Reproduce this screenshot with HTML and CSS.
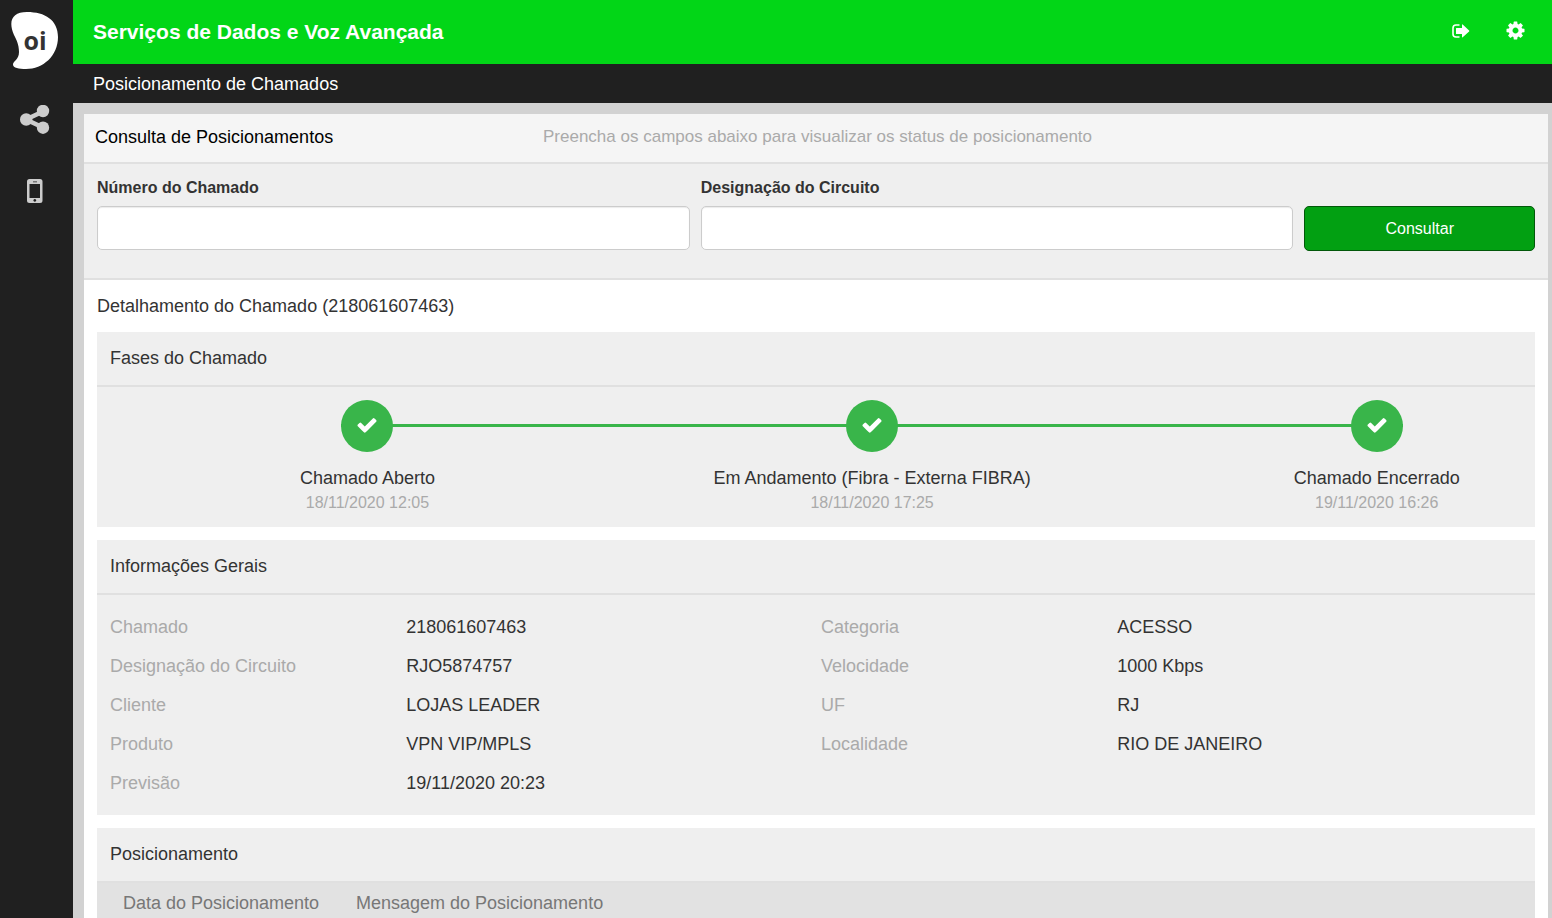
FILE: index.html
```html
<!DOCTYPE html>
<html lang="pt-BR">
<head>
<meta charset="utf-8">
<meta name="viewport" content="width=device-width, initial-scale=1">
<title>Posicionamento de Chamados</title>
<link rel="stylesheet" href="styles.css">
</head>
<body>
<div class="app">
  <nav class="sidebar" aria-label="Menu principal">
    <a class="logo" href="#" aria-label="oi">
      <svg width="48" height="58" viewBox="0 0 48 58">
        <path fill="#fff" d="M16 0C34 0 47 8 47 25c0 19-15 32-32 32-7 0-13-1-13-4.500C2 49 8 48 8 40 8 32 5 27 3 23-3 9 1 0 16 0z"/>
        <text class="logo-text" x="24" y="38" text-anchor="middle">oi</text>
      </svg>
    </a>
    <a class="nav-link" href="#" aria-label="Circuitos">
      <svg width="30" height="30" viewBox="0 0 30 30" fill="#ccc">
        <path d="M23 6.500 6 14.500l17 8" fill="none" stroke="#ccc" stroke-width="4.500"/>
        <circle cx="6.200" cy="14.500" r="6.200"/><circle cx="23" cy="6" r="6.200"/><circle cx="23" cy="22.700" r="6.200"/>
      </svg>
    </a>
    <a class="nav-link" href="#" aria-label="Celular">
      <svg width="16" height="24" viewBox="0 0 16 24">
        <path fill="#ccc" fill-rule="evenodd" d="M2.500 0h10.500a2.500 2.500 0 0 1 2.500 2.500v19a2.500 2.500 0 0 1-2.500 2.500H2.500A2.500 2.500 0 0 1 0 21.500v-19A2.500 2.500 0 0 1 2.500 0zM2.500 5v14h10.500V5zM6 2.500v.8h4v-.8zM7.800 20a1.400 1.400 0 1 0 .01 0z"/>
      </svg>
    </a>
  </nav>
  <div class="page">
    <header class="topbar">
      <h1 class="topbar-title">Serviços de Dados e Voz Avançada</h1>
      <div class="topbar-actions">
        <button class="icon-button" type="button" aria-label="Sair">
          <svg width="18" height="14" viewBox="0 0 18 14">
            <path d="M7.500 1H4Q1 1 1 4v6q0 3 3 3h3.500" fill="none" stroke="#fff" stroke-width="1.600"/>
            <path fill="#fff" d="M4.500 4H10V.8q0-.8.700-.3l6.400 6q.5.500 0 1l-6.400 5.800q-.7.500-.7-.3V10H4.500q-.5 0-.5-.5v-5q0-.5.500-.5z"/>
          </svg>
        </button>
        <button class="icon-button" type="button" aria-label="Configurações">
          <svg width="21" height="21" viewBox="0 0 1792 1792" fill="#fff">
            <path d="M1152 896q0-106-75-181t-181-75-181 75-75 181 75 181 181 75 181-75 75-181zm512-109v222q0 12-8 23t-20 13l-185 28q-19 54-39 91 35 50 107 138 10 12 10 25t-9 23q-27 37-99 108t-94 71q-12 0-26-9l-138-108q-44 23-91 38-16 136-29 186-7 28-36 28h-222q-14 0-24.500-8.500t-11.500-21.500l-28-184q-49-16-90-37l-141 107q-10 9-25 9-14 0-25-11-126-114-165-168-7-10-7-23 0-12 8-23 15-21 51-66.500t54-70.500q-27-50-41-99l-183-27q-13-2-21-12.500t-8-23.500v-222q0-12 8-23t19-13l186-28q14-46 39-92-40-57-107-138-10-12-10-24 0-10 9-23 26-36 98.500-107.500t94.500-71.500q13 0 26 10l138 107q44-23 91-38 16-136 29-186 7-28 36-28h222q14 0 24.500 8.500t11.500 21.500l28 184q49 16 90 37l142-107q9-9 24-9 13 0 25 10 129 119 165 170 7 8 7 22 0 12-8 23-15 21-51 66.500t-54 70.500q26 50 41 98l183 28q13 2 21 12.500t8 23.500z"/>
          </svg>
        </button>
      </div>
    </header>
    <div class="subbar">Posicionamento de Chamados</div>
    <main class="content">
      <div class="panel-head">
        <h2 class="panel-title">Consulta de Posicionamentos</h2>
        <p class="panel-hint">Preencha os campos abaixo para visualizar os status de posicionamento</p>
      </div>
      <form class="search">
        <div class="field">
          <label for="numero">Número do Chamado</label>
          <input id="numero" type="text">
        </div>
        <div class="field">
          <label for="circuito">Designação do Circuito</label>
          <input id="circuito" type="text">
        </div>
        <button class="submit" type="button">Consultar</button>
      </form>
      <div class="details">
        <h2 class="details-title">Detalhamento do Chamado (218061607463)</h2>
        <section class="card">
          <h3 class="card-title">Fases do Chamado</h3>
          <ol class="steps">
            <li class="step">
              <span class="step-mark"><svg width="22" height="22" viewBox="0 0 1792 1792" fill="#fff"><path d="M1671 566q0 40-28 68l-724 724-136 136q-28 28-68 28t-68-28l-136-136-362-362q-28-28-28-68t28-68l136-136q28-28 68-28t68 28l294 295 656-657q28-28 68-28t68 28l136 136q28 28 28 68z"/></svg></span>
              <span class="step-name">Chamado Aberto</span>
              <time class="step-date">18/11/2020 12:05</time>
            </li>
            <li class="step">
              <span class="step-mark"><svg width="22" height="22" viewBox="0 0 1792 1792" fill="#fff"><path d="M1671 566q0 40-28 68l-724 724-136 136q-28 28-68 28t-68-28l-136-136-362-362q-28-28-28-68t28-68l136-136q28-28 68-28t68 28l294 295 656-657q28-28 68-28t68 28l136 136q28 28 28 68z"/></svg></span>
              <span class="step-name">Em Andamento (Fibra - Externa FIBRA)</span>
              <time class="step-date">18/11/2020 17:25</time>
            </li>
            <li class="step">
              <span class="step-mark"><svg width="22" height="22" viewBox="0 0 1792 1792" fill="#fff"><path d="M1671 566q0 40-28 68l-724 724-136 136q-28 28-68 28t-68-28l-136-136-362-362q-28-28-28-68t28-68l136-136q28-28 68-28t68 28l294 295 656-657q28-28 68-28t68 28l136 136q28 28 28 68z"/></svg></span>
              <span class="step-name">Chamado Encerrado</span>
              <time class="step-date">19/11/2020 16:26</time>
            </li>
          </ol>
        </section>
        <section class="card">
          <h3 class="card-title">Informações Gerais</h3>
          <div class="info">
            <dl class="info-list">
              <dt>Chamado</dt><dd>218061607463</dd>
              <dt>Designação do Circuito</dt><dd>RJO5874757</dd>
              <dt>Cliente</dt><dd>LOJAS LEADER</dd>
              <dt>Produto</dt><dd>VPN VIP/MPLS</dd>
              <dt>Previsão</dt><dd>19/11/2020 20:23</dd>
            </dl>
            <dl class="info-list">
              <dt>Categoria</dt><dd>ACESSO</dd>
              <dt>Velocidade</dt><dd>1000 Kbps</dd>
              <dt>UF</dt><dd>RJ</dd>
              <dt>Localidade</dt><dd>RIO DE JANEIRO</dd>
            </dl>
          </div>
        </section>
        <section class="card">
          <h3 class="card-title">Posicionamento</h3>
          <table class="history">
            <thead>
              <tr><th class="history-date" scope="col">Data do Posicionamento</th><th scope="col">Mensagem do Posicionamento</th></tr>
            </thead>
          </table>
        </section>
      </div>
    </main>
  </div>
</div>
</body>
</html>
```
FILE: styles.css
```css
* { box-sizing: border-box; }
body {
  margin: 0;
  font-family: "Liberation Sans", Arial, sans-serif;
  font-size: 18px;
  line-height: 26px;
  color: #333;
  background: #d2d2d2;
}
h1, h2, h3, p, ol, dl, dd { margin: 0; padding: 0; font-weight: 400; }
h2, h3 { font-size: 18px; }
svg { display: block; }

.app { display: flex; height: 100vh; overflow: hidden; }
.sidebar {
  flex: 0 0 73px;
  display: flex;
  flex-direction: column;
  align-items: center;
  padding: 12px 4px 0 0;
  background: #202020;
}
.logo { margin-bottom: 35px; }
.logo-text { font: 700 25px "Open Sans", sans-serif; fill: #333; }
.nav-link { margin-bottom: 44px; }

.page { flex: 1; min-width: 0; }
.topbar {
  display: flex;
  align-items: center;
  justify-content: space-between;
  height: 64px;
  padding: 0 26px 0 20px;
  background: #02d617;
}
.topbar-title { font-size: 21px; font-weight: 700; color: #fff; }
.topbar-actions { display: flex; align-items: center; gap: 35px; padding-bottom: 3px; }
.icon-button { padding: 0; border: 0; background: none; }
.subbar {
  padding: 7px 20px 6px;
  background: #202020;
  color: #fff;
}

.content { padding: 11px 4px 0 11px; }
.panel-head {
  display: grid;
  grid-template-columns: 448px 1fr;
  padding: 10px 11px 12px;
  background: #f5f5f5;
  border-bottom: 2px solid #e0e0e0;
}
.panel-title { color: #000; }
.panel-hint { font-size: 17px; color: #aaa; }

.search {
  display: grid;
  grid-template-columns: 18fr 18fr 7fr;
  gap: 11px;
  align-items: start;
  padding: 13px 13px 27px;
  background: #efefef;
  border-bottom: 2px solid #e0e0e0;
}
.field label {
  display: block;
  margin-bottom: 7px;
  font-size: 16px;
  line-height: 22px;
  font-weight: 700;
}
.field input {
  display: block;
  width: 100%;
  height: 44px;
  padding: 8px 16px;
  border: 1px solid #ccc;
  border-radius: 5px;
  background: #fff;
  box-shadow: inset 0 1px 1px rgba(0, 0, 0, .08);
  font: inherit;
}
.submit {
  height: 45px;
  margin-top: 29px;
  border: 1px solid #02580a;
  border-radius: 5px;
  background: #02a012;
  color: #fff;
  font: 16px "Liberation Sans", Arial, sans-serif;
}

.details { padding: 13px; background: #fff; }
.details-title { margin-bottom: 13px; }
.card { margin-bottom: 13px; background: #efefef; }
.card-title {
  padding: 13px 13px 14px;
  border-bottom: 2px solid #e0e0e0;
}

.steps {
  display: flex;
  justify-content: space-between;
  padding: 13px 9.2% 13px 17%;
  list-style: none;
  background: linear-gradient(#39b54a, #39b54a) 0 24px / 100% 3px no-repeat content-box;
}
.step {
  display: flex;
  flex-direction: column;
  align-items: center;
  width: 52px;
  white-space: nowrap;
}
.step-mark {
  display: flex;
  align-items: center;
  justify-content: center;
  width: 52px;
  height: 52px;
  margin-bottom: 13px;
  padding-bottom: 3px;
  border-radius: 50%;
  background: #39b54a;
}
.step-date { font-size: 16px; line-height: 23px; color: #aaa; }

.info {
  display: grid;
  grid-template-columns: 1fr 1fr;
  padding: 13px 3px 12px 13px;
}
.info-list {
  display: grid;
  grid-template-columns: 5fr 7fr;
  align-content: start;
  line-height: 39px;
}
.info-list dt { color: #aaa; }

.history { width: 100%; border-collapse: collapse; background: #e2e2e2; }
.history th {
  padding: 7px 13px 12px;
  font-weight: 400;
  text-align: left;
  color: #777;
}
.history .history-date { width: 246px; padding-left: 26px; }
```
